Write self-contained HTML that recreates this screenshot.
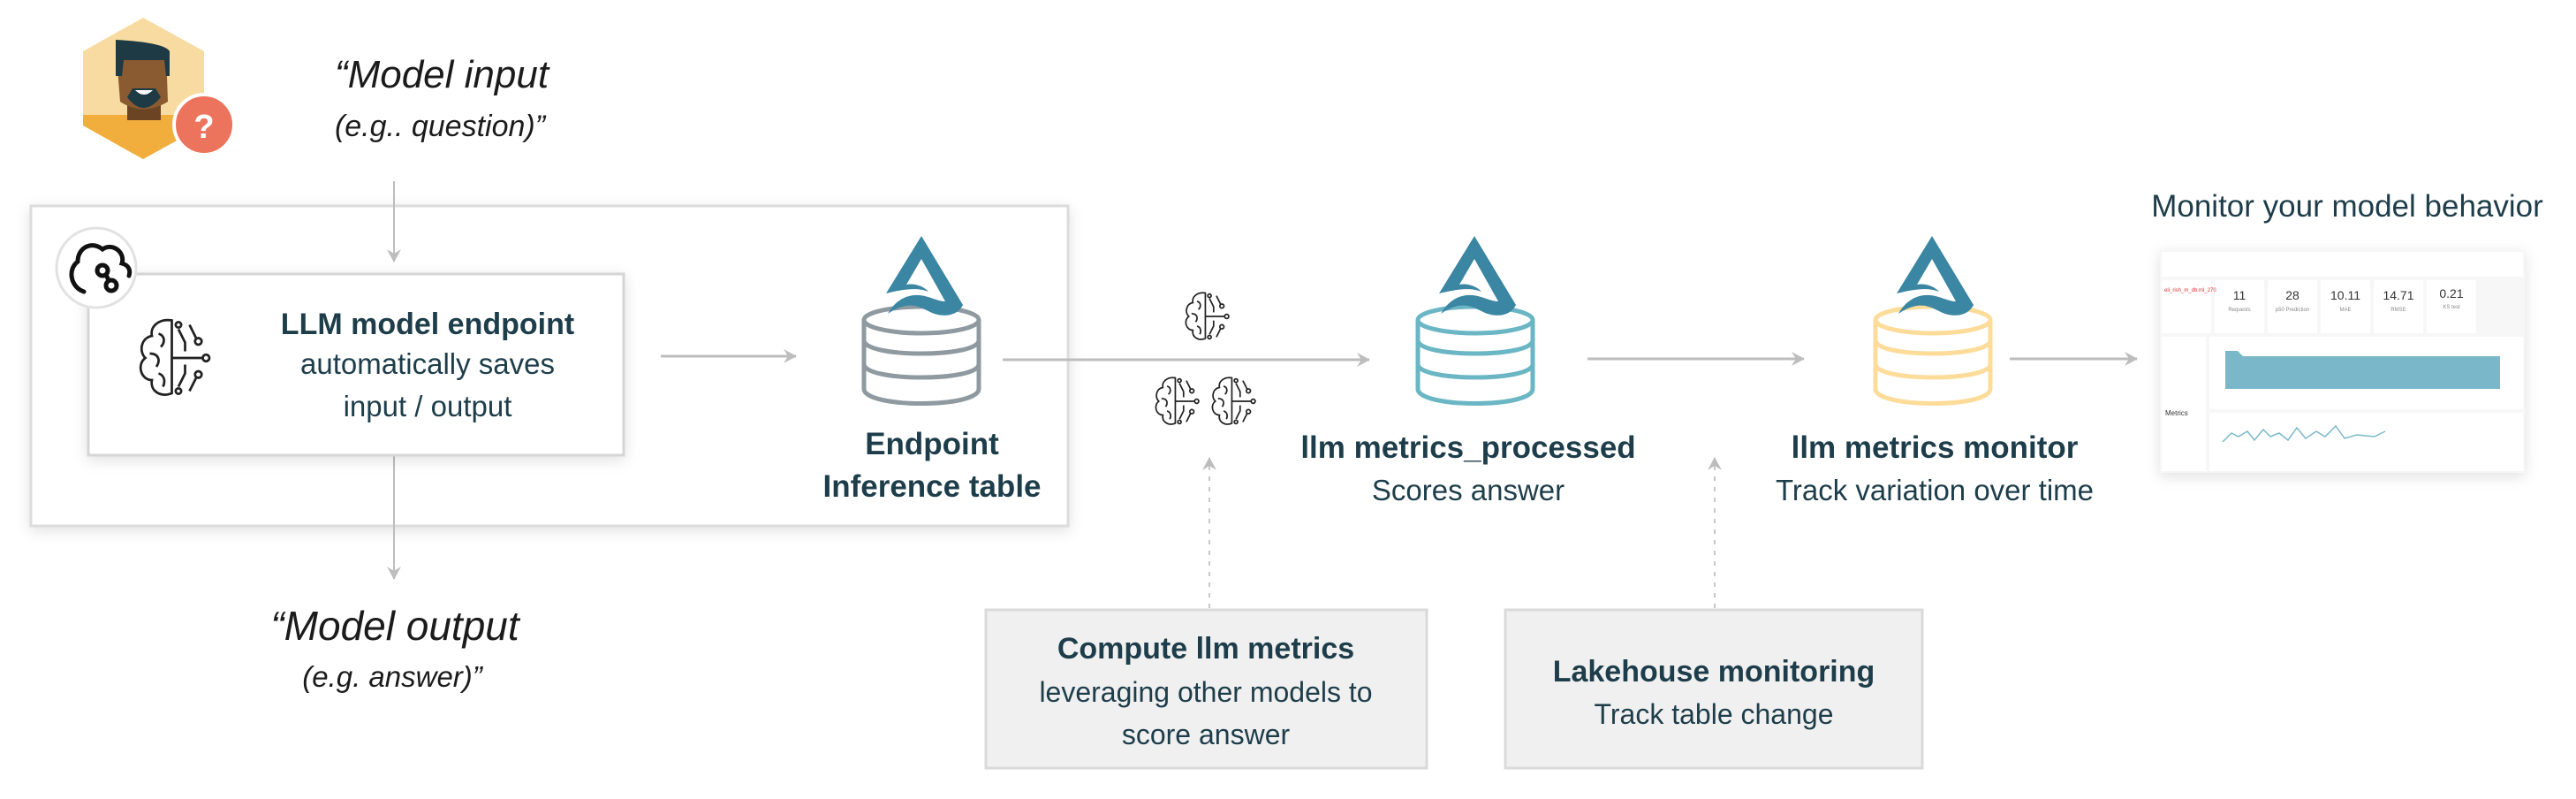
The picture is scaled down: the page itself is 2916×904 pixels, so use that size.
<!DOCTYPE html>
<html><head><meta charset="utf-8">
<style>
html,body{margin:0;padding:0;background:#fff;}
svg{display:block;font-family:"Liberation Sans",sans-serif;}
</style></head><body>
<svg width="2916" height="904" viewBox="0 0 2916 904" xmlns="http://www.w3.org/2000/svg">
<defs>
<filter id="sh" x="-5%" y="-5%" width="110%" height="115%"><feDropShadow dx="0" dy="4" stdDeviation="8" flood-color="#000" flood-opacity="0.12"/></filter>
<marker id="ah" markerWidth="16" markerHeight="16" refX="14" refY="8" orient="auto" markerUnits="userSpaceOnUse"><path d="M0,0 L15,8 L0,16 L5,8 Z" fill="#bdbdbd"/></marker>
<g id="brain" fill="none" stroke="#222" stroke-width="2.2">
<path d="M-2,-34 C-14,-36 -22,-28 -20,-20 C-30,-18 -32,-6 -26,0 C-34,6 -30,20 -20,20 C-22,30 -12,36 -2,32 Z"/>
<path d="M-14,-22 C-8,-20 -8,-14 -12,-10 M-22,-4 C-14,-4 -12,2 -16,8 M-14,14 C-8,16 -8,22 -10,26"/>
<path d="M-2,0 L26,0 M4,-26 L10,-14 L10,-6 M4,26 L10,14 L10,6 M14,-30 L20,-18 M14,30 L20,18"/>
<circle cx="29" cy="0" r="3"/><circle cx="22" cy="-15" r="3"/><circle cx="22" cy="15" r="3"/><circle cx="4" cy="-30" r="2.5"/><circle cx="4" cy="30" r="2.5"/>
</g>
<g id="logo">
<path d="M0,0 L47,78 C40,92 22,92 10,86 C-2,80 -15,72 -38,88 C-28,70 -12,64 4,68 C12,70 20,74 27,74 L0,26 L-17,55 C-8,53 3,57 8,63 C-4,58 -20,60 -40,65 Z" fill="#3b86a3"/>
</g>
</defs>

<!-- person -->
<polygon points="162,20 231,58 231,142 162,180 94,142 94,58" fill="#f8dba0"/>
<polygon points="94,130 231,130 231,142 162,180 94,142" fill="#f2ae3d"/>
<rect x="144" y="110" width="38" height="26" fill="#6b4424"/>
<path d="M131,52 L188,58 L190,115 Q162,132 136,115 Z" fill="#8a5a30"/>
<path d="M131,45 L131,86 L138,86 L140,68 L186,68 L188,86 L192,86 L192,58 Q186,48 131,45Z" fill="#1d3a45"/>
<path d="M144,110 Q162,134 182,110 L176,100 L150,100Z" fill="#1d3a45"/>
<path d="M153,102 L173,102 Q163,112 153,102Z" fill="#fff"/>
<circle cx="231" cy="141" r="34" fill="#ec735c" stroke="#fff" stroke-width="4"/>
<text x="231" y="156" text-anchor="middle" font-size="38" font-weight="bold" fill="#fff">?</text>

<text x="500" y="99" text-anchor="middle" font-size="44" font-style="italic" fill="#1b1b1b">“Model input</text>
<text x="498" y="154" text-anchor="middle" font-size="34" font-style="italic" fill="#1b1b1b">(e.g.. question)”</text>

<rect x="35" y="233" width="1174" height="362" fill="#fff" stroke="#dcdcdc" stroke-width="3" filter="url(#sh)"/>
<line x1="446" y1="205" x2="446" y2="296" stroke="#bdbdbd" stroke-width="2" marker-end="url(#ah)"/>
<line x1="446" y1="515" x2="446" y2="655" stroke="#bdbdbd" stroke-width="2" marker-end="url(#ah)"/>
<rect x="100" y="310" width="606" height="205" fill="#fff" stroke="#d6d6d6" stroke-width="3" filter="url(#sh)"/>
<circle cx="109" cy="303" r="45" fill="#fff" stroke="#e2e2e2" stroke-width="3"/>
<g fill="none" stroke="#111" stroke-width="5" stroke-linecap="round">
<path d="M95,330 C80,325 76,305 88,296 C88,280 104,272 116,282 C128,274 142,286 138,298 C146,300 148,306 146,312"/>
<circle cx="116" cy="306" r="6"/><circle cx="126" cy="323" r="6"/><path d="M120,311 L123,317"/>
</g>
<g transform="translate(197,405) scale(1.25)"><use href="#brain"/></g>
<text x="484" y="378" text-anchor="middle" font-size="34" font-weight="bold" fill="#1e3d4a">LLM model endpoint</text>
<text x="484" y="423" text-anchor="middle" font-size="33" fill="#1e3d4a">automatically saves</text>
<text x="484" y="471" text-anchor="middle" font-size="33" fill="#1e3d4a">input / output</text>

<text x="447" y="724" text-anchor="middle" font-size="46" font-style="italic" fill="#1b1b1b">“Model output</text>
<text x="444" y="777" text-anchor="middle" font-size="33" font-style="italic" fill="#1b1b1b">(e.g. answer)”</text>

<line x1="748" y1="403" x2="901" y2="403" stroke="#bdbdbd" stroke-width="3" marker-end="url(#ah)"/>
<line x1="1135" y1="407" x2="1550" y2="407" stroke="#bdbdbd" stroke-width="3" marker-end="url(#ah)"/>
<line x1="1797" y1="406" x2="2042" y2="406" stroke="#bdbdbd" stroke-width="3" marker-end="url(#ah)"/>
<line x1="2275" y1="406" x2="2419" y2="406" stroke="#bdbdbd" stroke-width="3" marker-end="url(#ah)"/>

<g fill="#fff" stroke="#8e9aa0" stroke-width="5">
<path d="M978,362 L978,440 C978,462 1108,462 1108,440 L1108,362"/>
<path d="M978,412 C978,432 1108,432 1108,412"/>
<path d="M978,385 C978,405 1108,405 1108,385"/>
<ellipse cx="1043" cy="362" rx="65" ry="15"/>
</g>
<use href="#logo" x="1043" y="267"/>
<text x="1055" y="514" text-anchor="middle" font-size="35" font-weight="bold" fill="#1e3d4a">Endpoint</text>
<text x="1055" y="562" text-anchor="middle" font-size="35" font-weight="bold" fill="#1e3d4a">Inference table</text>

<g fill="#fff" stroke="#6bb6c4" stroke-width="5">
<path d="M1605,362 L1605,440 C1605,462 1735,462 1735,440 L1735,362"/>
<path d="M1605,412 C1605,432 1735,432 1735,412"/>
<path d="M1605,385 C1605,405 1735,405 1735,385"/>
<ellipse cx="1670" cy="362" rx="65" ry="15"/>
</g>
<use href="#logo" x="1669" y="267"/>
<g fill="#fff" stroke="#fddc9a" stroke-width="5">
<path d="M2123,362 L2123,440 C2123,462 2253,462 2253,440 L2253,362"/>
<path d="M2123,412 C2123,432 2253,432 2253,412"/>
<path d="M2123,385 C2123,405 2253,405 2253,385"/>
<ellipse cx="2188" cy="362" rx="65" ry="15"/>
</g>
<use href="#logo" x="2187" y="267"/>

<g transform="translate(1366,358) scale(0.78)"><use href="#brain"/></g>
<g transform="translate(1332,454) scale(0.78)"><use href="#brain"/></g>
<g transform="translate(1396,454) scale(0.78)"><use href="#brain"/></g>

<text x="1662" y="518" text-anchor="middle" font-size="35" font-weight="bold" fill="#1e3d4a">llm metrics_processed</text>
<text x="1662" y="566" text-anchor="middle" font-size="33" fill="#1e3d4a">Scores answer</text>
<text x="2190" y="518" text-anchor="middle" font-size="35" font-weight="bold" fill="#1e3d4a">llm metrics monitor</text>
<text x="2190" y="566" text-anchor="middle" font-size="33" fill="#1e3d4a">Track variation over time</text>

<line x1="1369" y1="688" x2="1369" y2="518" stroke="#c8c8c8" stroke-width="2" stroke-dasharray="5,7" marker-end="url(#ah)"/>
<line x1="1941" y1="688" x2="1941" y2="518" stroke="#c8c8c8" stroke-width="2" stroke-dasharray="5,7" marker-end="url(#ah)"/>

<rect x="1116" y="690" width="499" height="179" fill="#f0f0f0" stroke="#dadada" stroke-width="3"/>
<text x="1365" y="745" text-anchor="middle" font-size="34" font-weight="bold" fill="#1e3d4a">Compute llm metrics</text>
<text x="1365" y="794" text-anchor="middle" font-size="32" fill="#1e3d4a">leveraging other models to</text>
<text x="1365" y="842" text-anchor="middle" font-size="32" fill="#1e3d4a">score answer</text>
<rect x="1704" y="690" width="472" height="179" fill="#f0f0f0" stroke="#dadada" stroke-width="3"/>
<text x="1940" y="771" text-anchor="middle" font-size="34" font-weight="bold" fill="#1e3d4a">Lakehouse monitoring</text>
<text x="1940" y="819" text-anchor="middle" font-size="32" fill="#1e3d4a">Track table change</text>

<text x="2657" y="245" text-anchor="middle" font-size="35" fill="#1e3d4a">Monitor your model behavior</text>

<g filter="url(#sh)"><rect x="2445" y="283" width="413" height="252" fill="#f7f7f7"/></g>
<rect x="2447" y="285" width="409" height="28" fill="#fff"/>
<rect x="2447" y="317" width="56" height="60" fill="#fff"/>
<g fill="#fff"><rect x="2507" y="317" width="56" height="60"/><rect x="2567" y="317" width="56" height="60"/><rect x="2627" y="317" width="56" height="60"/><rect x="2687" y="317" width="56" height="60"/><rect x="2747" y="317" width="56" height="60"/></g>
<g font-size="14" fill="#333" text-anchor="middle"><text x="2535" y="339">11</text><text x="2595" y="339">28</text><text x="2655" y="339">10.11</text><text x="2715" y="339">14.71</text><text x="2775" y="337">0.21</text></g>
<g font-size="6" fill="#888" text-anchor="middle"><text x="2535" y="352">Requests</text><text x="2595" y="352">p50 Prediction</text><text x="2655" y="352">MAE</text><text x="2715" y="352">RMSE</text><text x="2775" y="349">KS test</text></g>
<text x="2450" y="330" font-size="6" fill="#d33">eli_rish_m_db.ml_270</text>
<rect x="2447" y="381" width="50" height="152" fill="#fff"/>
<rect x="2501" y="381" width="355" height="82" fill="#fff"/>
<rect x="2501" y="467" width="355" height="66" fill="#fff"/>
<path d="M2519,397 L2533,397 L2539,403 L2830,403 L2830,440 L2519,440Z" fill="#7ab8c9"/>
<path d="M2516,500 l10,-10 l8,4 l10,-6 l8,10 l10,-12 l8,8 l10,-4 l10,8 l10,-14 l10,12 l12,-8 l10,6 l12,-12 l10,14 l14,-4 l20,2 l12,-6" fill="none" stroke="#7ab8c9" stroke-width="1.5"/>
<text x="2451" y="470" font-size="8" fill="#333">Metrics</text>
</svg>
</body></html>
